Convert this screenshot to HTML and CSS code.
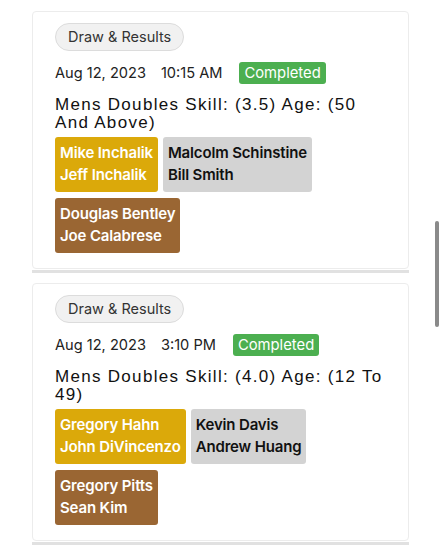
FILE: index.html
```html
<!DOCTYPE html>
<html>
<head>
<meta charset="utf-8">
<link rel="stylesheet" href="styles.css">
</head>
<body>
<div class="list">
  <div class="event">
    <div class="card">
      <span class="pill">Draw &amp; Results</span>
      <div class="meta">
        <span class="date">Aug 12, 2023</span>
        <span class="time">10:15 AM</span>
        <span class="status">Completed</span>
      </div>
      <div class="title">Mens Doubles Skill: (3.5) Age: (50 And Above)</div>
      <div class="teams">
        <div class="team gold"><div>Mike Inchalik</div><div>Jeff Inchalik</div></div>
        <div class="team silver"><div>Malcolm Schinstine</div><div>Bill Smith</div></div>
        <div class="team bronze"><div>Douglas Bentley</div><div>Joe Calabrese</div></div>
      </div>
    </div>
    <div class="sep"></div>
  </div>
  <div class="event">
    <div class="card">
      <span class="pill">Draw &amp; Results</span>
      <div class="meta">
        <span class="date">Aug 12, 2023</span>
        <span class="time">3:10 PM</span>
        <span class="status">Completed</span>
      </div>
      <div class="title">Mens Doubles Skill: (4.0) Age: (12 To 49)</div>
      <div class="teams">
        <div class="team gold"><div>Gregory Hahn</div><div>John DiVincenzo</div></div>
        <div class="team silver"><div>Kevin Davis</div><div>Andrew Huang</div></div>
        <div class="team bronze"><div>Gregory Pitts</div><div>Sean Kim</div></div>
      </div>
    </div>
    <div class="sep"></div>
  </div>
</div>
<div class="scrollbar"></div>
</body>
</html>
```
FILE: styles.css
```css
html, body {
  margin: 0;
  padding: 0;
  background: #ffffff;
}
body {
  font-family: Inter, "Liberation Sans", sans-serif;
  color: #222;
  width: 442px;
  height: 553px;
  overflow: hidden;
  position: relative;
}
.list {
  padding: 11px 33px 0 32px;
  display: flex;
  flex-direction: column;
  gap: 10px;
}
.card {
  border: 1px solid #ececec;
  border-radius: 4px;
  padding: 11px 20px 15px 22px;
  display: flex;
  flex-direction: column;
  align-items: flex-start;
}
.sep {
  height: 3px;
  margin-top: 1px;
  background: #e1e1e1;
}
.pill {
  box-sizing: border-box;
  height: 28px;
  padding: 0 12px;
  border: 1px solid #dcdcdc;
  border-radius: 14px;
  background: #f1f1f1;
  font-size: 14.5px;
  line-height: 26px;
  color: #333;
}
.meta {
  margin-top: 11px;
  display: flex;
  align-items: center;
  font-size: 14.6px;
  color: #222;
  height: 22px;
}
.time {
  margin-left: 15px;
}
.status {
  margin-left: 17px;
  background: #4caf50;
  color: #fff;
  border-radius: 3px;
  padding: 0 5px;
  height: 22px;
  line-height: 22px;
  font-size: 14.8px;
}
.title {
  margin-top: 12px;
  font-family: "Liberation Sans", Arial, sans-serif;
  font-size: 17px;
  line-height: 18px;
  letter-spacing: 1.3px;
  color: #111;
}
.teams {
  margin-top: 5px;
  display: flex;
  flex-wrap: wrap;
  gap: 6px 5px;
}
.team {
  padding: 5px 5px 6px;
  border-radius: 3px;
  font-size: 15px;
  font-weight: 600;
  line-height: 22px;
  letter-spacing: -0.15px;
}
.gold {
  background: #dba90a;
  color: #fff;
}
.silver {
  background: #d3d3d3;
  color: #111;
}
.bronze {
  background: #9a6633;
  color: #fff;
}
.scrollbar {
  position: absolute;
  left: 435px;
  top: 221px;
  width: 4px;
  height: 106px;
  border-radius: 2px;
  background: #8a8a8a;
}
```
